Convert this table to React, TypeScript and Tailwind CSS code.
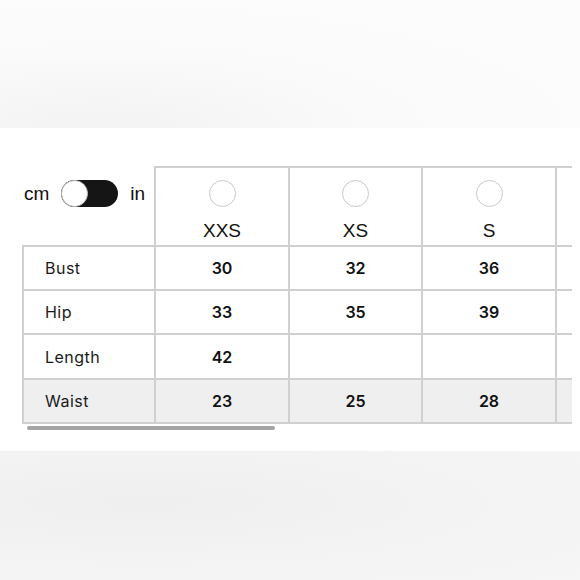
import React from 'react';

const sizes = ['XXS', 'XS', 'S', ''];
const widths = ['w-[134px]', 'w-[133px]', 'w-[134px]', 'w-[134px]'];

const rows = [
  { label: 'Bust', values: ['30', '32', '36', ''], h: 'h-[44px]', shade: false },
  { label: 'Hip', values: ['33', '35', '39', ''], h: 'h-[44px]', shade: false },
  { label: 'Length', values: ['42', '', '', ''], h: 'h-[45px]', shade: false },
  { label: 'Waist', values: ['23', '25', '28', ''], h: 'h-[44px]', shade: true },
];

function UnitToggle() {
  return (
    <div className="flex items-center gap-[12px] pl-[2px] pt-[14px] text-[19px] text-[#111] font-['Liberation_Sans',Arial,sans-serif]">
      <span className="leading-none">cm</span>
      <div className="relative h-[27px] w-[57px] rounded-full bg-[#151515]">
        <div className="absolute left-0 top-0 h-[27px] w-[27px] rounded-full border border-[#bdbdbd] bg-white" />
      </div>
      <span className="leading-none">in</span>
    </div>
  );
}

export default function App() {
  return (
    <div className="flex h-[580px] w-[580px] flex-col overflow-hidden bg-white">
      <div className="h-[128px] shrink-0 bg-[radial-gradient(ellipse_at_18%_100%,#f3f3f3_0%,#f9f9f9_35%,#fcfcfc_70%)]" />

      <div className="h-[323px] shrink-0 bg-white pl-[22px] pt-[38px]">
        <div className="w-[550px] overflow-hidden">
          <div className="w-[700px]">
            {/* header */}
            <div className="flex">
              <div className="box-border h-[81px] w-[134px] shrink-0 border-b-2 border-r-2 border-[#d0d0d0]">
                <UnitToggle />
              </div>
              {sizes.map((s, i) => (
                <div
                  key={i}
                  className={`box-border flex h-[81px] shrink-0 flex-col items-center border-y-2 border-r-2 border-[#d0d0d0] pt-[12px] ${widths[i]}`}
                >
                  <div className="h-[27px] w-[27px] rounded-full border-[1.5px] border-[#c8c8c8] bg-white" />
                  <div className="mt-[12px] h-[24px] text-[19px] leading-[24px] text-[#111] font-['Liberation_Sans',Arial,sans-serif]">
                    {s}
                  </div>
                </div>
              ))}
            </div>

            {/* body */}
            {rows.map((r) => (
              <div key={r.label} className={`flex ${r.shade ? 'bg-[#efefef]' : 'bg-white'}`}>
                <div
                  className={`box-border flex w-[134px] shrink-0 items-center border-b-2 border-l-2 border-r-2 border-[#d0d0d0] pl-[21px] text-[16px] tracking-[0.03em] text-[#1a1a1a] font-['Inter',sans-serif] ${r.h}`}
                >
                  {r.label}
                </div>
                {r.values.map((v, i) => (
                  <div
                    key={i}
                    className={`box-border flex shrink-0 items-center justify-center border-b-2 border-r-2 border-[#d0d0d0] text-[16px] font-semibold text-[#111] font-['Inter',sans-serif] ${widths[i]} ${r.h}`}
                  >
                    {v}
                  </div>
                ))}
              </div>
            ))}
          </div>
        </div>
        <div className="ml-[5px] mt-[2px] h-[4px] w-[248px] rounded-full bg-[#a4a4a4]" />
      </div>

      <div className="flex-1 bg-[radial-gradient(ellipse_at_25%_40%,#efefef_0%,#f2f2f2_40%,#f6f6f6_100%)]" />
    </div>
  );
}
